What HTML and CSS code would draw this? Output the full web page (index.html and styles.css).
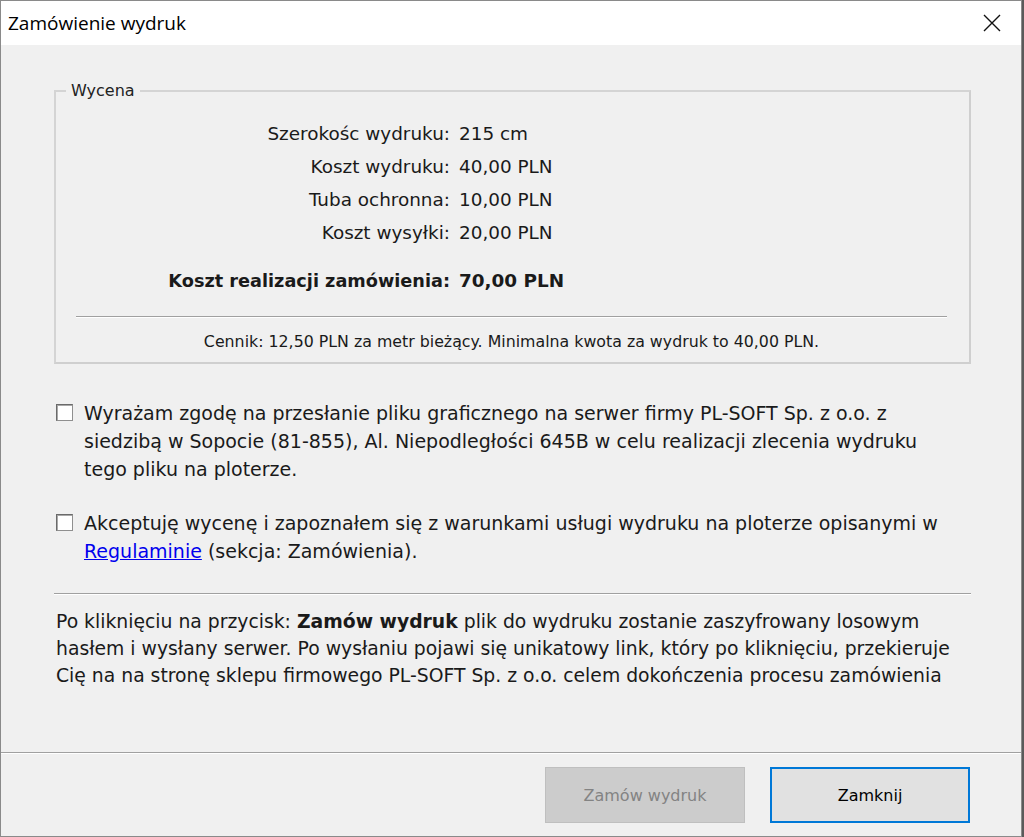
FILE: index.html
```html
<!DOCTYPE html>
<html lang="pl">
<head>
  <meta charset="UTF-8" />
  <title>Zamówienie wydruk</title>
  <link rel="stylesheet" href="styles.css">
</head>
<body>
<div class="window">
  <div class="titlebar">
    <span class="title">Zamówienie wydruk</span>
    <span class="close">
      <svg width="18" height="18" viewBox="0 0 18 18"><path d="M1 1 L17 17 M17 1 L1 17" stroke="#111" stroke-width="1.4" fill="none"/></svg>
    </span>
  </div>

  <div class="content">
    <fieldset class="quote">
      <legend>Wycena</legend>
      <div class="rows">
        <div class="label">Szerokośc wydruku:</div><div class="value">215 cm</div>
        <div class="label">Koszt wydruku:</div><div class="value">40,00 PLN</div>
        <div class="label">Tuba ochronna:</div><div class="value">10,00 PLN</div>
        <div class="label">Koszt wysyłki:</div><div class="value">20,00 PLN</div>
        <div class="label total">Koszt realizacji zamówienia:</div><div class="value total">70,00 PLN</div>
      </div>
      <div class="sep"></div>
      <div class="pricelist">Cennik: 12,50 PLN za metr bieżący. Minimalna kwota za wydruk to 40,00 PLN.</div>
    </fieldset>

    <label class="check first">
      <span class="box"></span>
      <span class="text">Wyrażam zgodę na przesłanie pliku graficznego na serwer firmy PL-SOFT Sp. z o.o. z siedzibą w Sopocie (81-855), Al. Niepodległości 645B w celu realizacji zlecenia wydruku tego pliku na ploterze.</span>
    </label>

    <label class="check second">
      <span class="box"></span>
      <span class="text">Akceptuję wycenę i zapoznałem się z warunkami usługi wydruku na ploterze opisanymi w <a href="#">Regulaminie</a> (sekcja: Zamówienia).</span>
    </label>

    <div class="sep wide"></div>

    <p class="info">Po kliknięciu na przycisk: <b>Zamów wydruk</b> plik do wydruku zostanie zaszyfrowany losowym hasłem i wysłany serwer. Po wysłaniu pojawi się unikatowy link, który po kliknięciu, przekieruje Cię na na stronę sklepu firmowego PL-SOFT Sp. z o.o. celem dokończenia procesu zamówienia</p>
  </div>

  <div class="footer">
    <button class="btn" disabled>Zamów wydruk</button>
    <button class="btn default">Zamknij</button>
  </div>
</div>
</body>
</html>
```

FILE: styles.css
```css
body {
  margin: 0;
  padding: 0;
  background: #5a5a5a;
  font-family: "DejaVu Sans", sans-serif;
  color: #1a1a1a;
}
.window {
  width: 1020px;
  height: 835px;
  background: #f0f0f0;
  border: 1px solid #8a8a8a;
  display: flex;
  flex-direction: column;
}
.titlebar {
  height: 44px;
  flex: none;
  background: white;
  display: flex;
  align-items: center;
  justify-content: space-between;
  padding: 0 0 0 7px;
}
.title {
  font-family: "Open Sans", "Noto Sans", sans-serif;
  font-size: 19px;
  color: #000;
}
.close {
  width: 46px;
  display: flex;
  justify-content: center;
  padding-right: 6px;
}
.content {
  flex: 1;
  padding: 36px 50px 0 53px;
}
.quote {
  margin: 0;
  border: 2px solid #d4d4d4;
  border-right-color: #cfcfcf;
  border-bottom-color: #cfcfcf;
  padding: 23px 22px 12px 20px;
  height: 244px;
}
.quote legend {
  font-size: 16px;
  padding: 0 5px;
  margin-left: -10px;
  color: #222;
}
.rows {
  display: grid;
  grid-template-columns: 374px auto;
  column-gap: 9px;
  row-gap: 11px;
  font-size: 18.4px;
  line-height: 22px;
}
.label {
  text-align: right;
}
.total {
  font-weight: bold;
  margin-top: 15px;
}
.label.total {
  font-size: 17.7px;
}
.sep {
  height: 0;
  border-top: 1px solid #a0a0a0;
  border-bottom: 1px solid #ffffff;
  margin-top: 24px;
}
.pricelist {
  text-align: center;
  font-size: 15.8px;
  margin-top: 14px;
}
.check {
  display: flex;
  align-items: flex-start;
  gap: 11px;
  font-size: 19px;
  line-height: 28px;
}
.check .text {
  width: 865px;
}
.check.first {
  margin-top: 35px;
}
.check.second {
  margin-top: 26px;
}
.box {
  flex: none;
  width: 15px;
  height: 15px;
  margin-top: 5px;
  margin-left: 2px;
  background: white;
  border: 1px solid #8f8f8f;
  border-top-color: #6a6a6a;
  border-left-color: #6a6a6a;
  box-shadow: inset 1px 1px 0 #a8a8a8;
}
.check a {
  color: #0000ee;
}
.sep.wide {
  margin-top: 28px;
}
.info {
  margin: 13px -8px 0 2px;
  font-size: 18.8px;
  line-height: 27px;
}
.footer {
  height: 84px;
  flex: none;
  box-sizing: border-box;
  border-top: 1px solid #a0a0a0;
  box-shadow: inset 0 1px 0 #ffffff;
  display: flex;
  justify-content: flex-end;
  align-items: flex-start;
  gap: 25px;
  padding: 14px 51px 0 0;
}
.btn {
  width: 200px;
  height: 56px;
  font-family: "DejaVu Sans", sans-serif;
  font-size: 16px;
  background: #e1e1e1;
  border: 1px solid #adadad;
  color: #000;
}
.btn:disabled {
  background: #cccccc;
  border-color: #bfbfbf;
  color: #838383;
}
.btn.default {
  border: 2px solid #0078d7;
}
```
